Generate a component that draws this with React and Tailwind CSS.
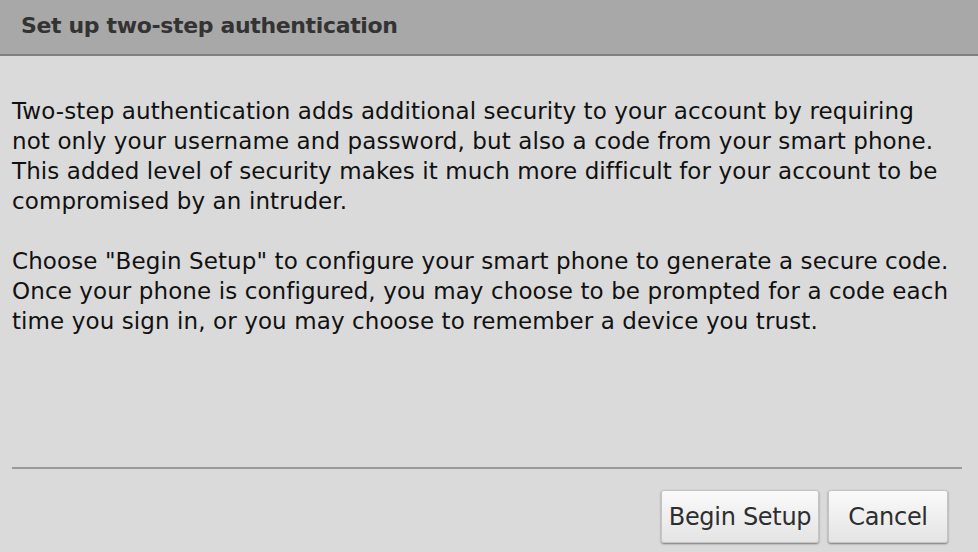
export default function App() {
  const font = { fontFamily: '"DejaVu Sans", "Noto Sans", sans-serif' };
  return (
    <div className="w-[978px] h-[552px] flex flex-col bg-[#dadada] overflow-hidden" style={font}>
      <div className="h-[56px] shrink-0 bg-[#a8a8a8] border-b-2 border-[#7f7f7f] flex items-center pl-[21px]">
        <h1 className="text-[22px] font-bold text-[#333333] tracking-[-0.35px] leading-none pb-[2px]">Set up two-step authentication</h1>
      </div>
      <div className="flex-1 flex flex-col px-[12px] pt-[40px]">
        <div className="text-[23px] leading-[30px] text-[#111111] whitespace-nowrap tracking-[0.1px]">
          <p>
            Two-step authentication adds additional security to your account by requiring<br />
            not only your username and password, but also a code from your smart phone.<br />
            This added level of security makes it much more difficult for your account to be<br />
            compromised by an intruder.
          </p>
          <p className="mt-[30px]">
            Choose "Begin Setup" to configure your smart phone to generate a secure code.<br />
            Once your phone is configured, you may choose to be prompted for a code each<br />
            time you sign in, or you may choose to remember a device you trust.
          </p>
        </div>
        <div className="mt-auto h-[2px] bg-[#9a9a9a] mr-[4px]" />
        <div className="flex justify-end gap-[9px] pt-[21px] pb-[9px] pr-[18px]">
          <button className="h-[53px] w-[158px] rounded-[3px] border border-[#c4c4c4] bg-gradient-to-b from-[#fafafa] to-[#e4e4e4] shadow-[0_1px_2px_rgba(0,0,0,0.45)] text-[24px] text-[#2e2e2e] tracking-[-0.3px]">Begin Setup</button>
          <button className="h-[53px] w-[120px] rounded-[3px] border border-[#c4c4c4] bg-gradient-to-b from-[#fafafa] to-[#e4e4e4] shadow-[0_1px_2px_rgba(0,0,0,0.45)] text-[24px] text-[#2e2e2e] tracking-[-0.3px]">Cancel</button>
        </div>
      </div>
    </div>
  );
}
